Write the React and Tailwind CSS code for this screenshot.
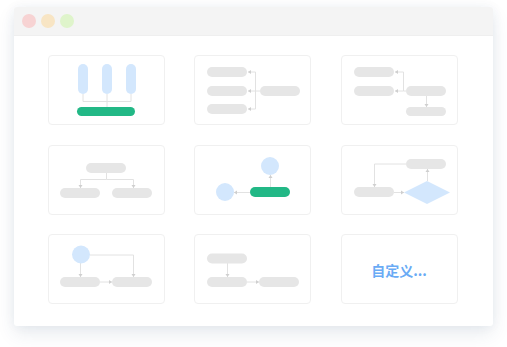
import React from 'react';

const PILL = '#e6e6e6';
const BLUE = '#d3e7fd';
const GREEN = '#22b886';
const LINE = '#e2e2e2';
const HEAD = '#cfcfcf';

// small arrow heads, tip at (x, y)
const Arrow = ({ x, y, dir }) => {
  const p = {
    left: `${x},${y} ${x + 3},${y - 2} ${x + 3},${y + 2}`,
    right: `${x},${y} ${x - 3},${y - 2} ${x - 3},${y + 2}`,
    down: `${x},${y} ${x - 2},${y - 3} ${x + 2},${y - 3}`,
    up: `${x},${y} ${x - 2},${y + 3} ${x + 2},${y + 3}`,
  }[dir];
  return <polygon points={p} fill={HEAD} />;
};

const Pill = ({ x, y, w = 40, h = 10, fill = PILL }) => (
  <rect x={x} y={y} width={w} height={h} rx={h / 2} fill={fill} />
);

const Card = ({ children }) => (
  <div className="w-[117px] h-[70px] rounded-[4px] border border-[#f0f0f0] bg-white flex items-center justify-center">
    {children}
  </div>
);

const Diagram = ({ children }) => (
  <svg width="117" height="70" viewBox="0 0 117 70" className="-m-px">
    <g fill="none" stroke={LINE} strokeWidth="1">{children[0]}</g>
    {children.slice(1)}
  </svg>
);

const diagrams = [
  <Diagram key="1">
    <path d="M35 39V46.5H83V39M59 39V52" />
    <rect x="30" y="9" width="10" height="30" rx="5" fill={BLUE} />
    <rect x="54" y="9" width="10" height="30" rx="5" fill={BLUE} />
    <rect x="78" y="9" width="10" height="30" rx="5" fill={BLUE} />
    <Pill x={29} y={52} w={58} h={9} fill={GREEN} />
  </Diagram>,
  <Diagram key="2">
    <path d="M54 17H61.5V54H54M54 36H66" />
    <Pill x={13} y={12} />
    <Pill x={13} y={31} />
    <Pill x={13} y={49} />
    <Pill x={66} y={31} />
    <Arrow x={54} y={17} dir="left" />
    <Arrow x={54} y={36} dir="left" />
    <Arrow x={54} y={54} dir="left" />
  </Diagram>,
  <Diagram key="3">
    <path d="M54 17H62.5V36H54M62.5 36H65M85.5 41V52" />
    <Pill x={13} y={12} />
    <Pill x={13} y={31} />
    <Pill x={65} y={31} />
    <Pill x={65} y={52} h={9} />
    <Arrow x={54} y={17} dir="left" />
    <Arrow x={54} y={36} dir="left" />
    <Arrow x={85.5} y={52} dir="down" />
  </Diagram>,
  <Diagram key="4">
    <path d="M58.5 28V34.5H32.5V43M58.5 34.5H85.5V43" />
    <Pill x={38} y={18} />
    <Pill x={12} y={43} />
    <Pill x={64} y={43} />
    <Arrow x={32.5} y={43} dir="down" />
    <Arrow x={85.5} y={43} dir="down" />
  </Diagram>,
  <Diagram key="5">
    <path d="M56 47.5H40M76.5 42V30" />
    <circle cx="76" cy="21" r="9" fill={BLUE} />
    <circle cx="31" cy="47" r="9" fill={BLUE} />
    <Pill x={56} y={42} h={10} fill={GREEN} />
    <Arrow x={40} y={47.5} dir="left" />
    <Arrow x={76.5} y={30} dir="up" />
  </Diagram>,
  <Diagram key="6">
    <path d="M65 19H33.5V42M86.5 36V24M53 47.5H63" />
    <Pill x={65} y={14} />
    <Pill x={13} y={42} />
    <polygon points="86,36 109,47.5 86,59 63,47.5" fill={BLUE} />
    <Arrow x={33.5} y={42} dir="down" />
    <Arrow x={86.5} y={24} dir="up" />
    <Arrow x={63} y={47.5} dir="right" />
  </Diagram>,
  <Diagram key="7">
    <path d="M32.5 29V43M42 21H85.5V43M52 48H64" />
    <circle cx="33" cy="20.5" r="9" fill={BLUE} />
    <Pill x={12} y={43} />
    <Pill x={64} y={43} />
    <Arrow x={32.5} y={43} dir="down" />
    <Arrow x={85.5} y={43} dir="down" />
    <Arrow x={64} y={48} dir="right" />
  </Diagram>,
  <Diagram key="8">
    <path d="M33.5 29V43M53 48H65" />
    <Pill x={13} y={19.5} />
    <Pill x={13} y={43} />
    <Pill x={65} y={43} />
    <Arrow x={33.5} y={43} dir="down" />
    <Arrow x={65} y={48} dir="right" />
  </Diagram>,
];

export default function App() {
  return (
    <div className="w-[507px] h-[347px] bg-white pt-[7px] pl-[13.5px]">
      <div className="w-[479px] h-[319px] rounded-[3px] bg-white shadow-[0_8px_18px_rgba(40,70,110,0.10),0_0_12px_rgba(40,70,110,0.05)] overflow-hidden">
        <div className="h-[29px] bg-[#f4f4f4] border-b border-[#efefef] flex items-center gap-[5px] pl-[8px]">
          <span className="w-[14px] h-[14px] rounded-full bg-[#f7d3d3]" />
          <span className="w-[14px] h-[14px] rounded-full bg-[#f8e5c4]" />
          <span className="w-[14px] h-[14px] rounded-full bg-[#dff4cb]" />
        </div>
        <div className="grid grid-cols-[117px_117px_117px] gap-x-[29.5px] gap-y-[19.5px] pl-[34px] pt-[19px]">
          {diagrams.map((d, i) => (
            <Card key={i}>{d}</Card>
          ))}
          <Card>
            <span className="text-[14px] font-bold text-[#6aabf5] font-['Noto_Sans_CJK_SC',sans-serif] mt-[2px]">
              自定义...
            </span>
          </Card>
        </div>
      </div>
    </div>
  );
}
